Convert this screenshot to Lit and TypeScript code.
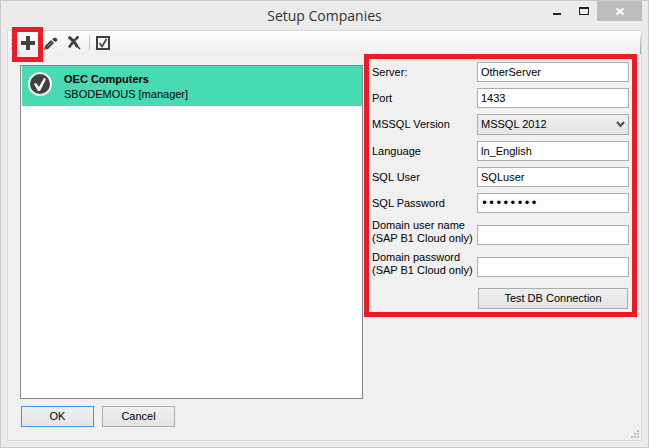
import { LitElement, html, css } from "lit";
import { customElement, property, state } from "lit/decorators.js";
import { classMap } from "lit/directives/class-map.js";

interface Company {
  name: string;
  detail: string;
}

interface Field {
  id: string;
  label: string;
  note?: string;
  type: "text" | "password" | "select";
  value: string;
}

const COMPANIES: Company[] = [{ name: "OEC Computers", detail: "SBODEMOUS [manager]" }];

const FIELDS: Field[] = [
  { id: "server", label: "Server:", type: "text", value: "OtherServer" },
  { id: "port", label: "Port", type: "text", value: "1433" },
  { id: "version", label: "MSSQL Version", type: "select", value: "MSSQL 2012" },
  { id: "language", label: "Language", type: "text", value: "ln_English" },
  { id: "sql-user", label: "SQL User", type: "text", value: "SQLuser" },
  { id: "sql-password", label: "SQL Password", type: "password", value: "password" },
  { id: "domain-user", label: "Domain user name", note: "(SAP B1 Cloud only)", type: "text", value: "" },
  { id: "domain-password", label: "Domain password", note: "(SAP B1 Cloud only)", type: "password", value: "" },
];

const buttonStyles = css`
  .push {
    box-sizing: border-box;
    height: 21px;
    padding: 0;
    border: 1px solid #acacac;
    border-radius: 0;
    background: linear-gradient(#f0f0f0, #e4e4e4);
    color: #000;
    font: inherit;
  }
`;

@customElement("title-bar")
export class TitleBar extends LitElement {
  @property() heading = "";

  static styles = css`
    :host {
      display: grid;
      grid-template-columns: 1fr auto 1fr;
      height: 29px;
      padding: 0 6px;
    }
    .heading {
      grid-column: 2;
      margin: 0;
      font: 14px/30px "Open Sans", sans-serif;
      color: #333;
    }
    .controls {
      display: flex;
      justify-content: flex-end;
      height: 20px;
    }
    button {
      width: 27px;
      padding: 0;
      border: 0;
      background: none;
    }
    .close {
      width: 45px;
      background: #bcbcbc;
    }
    svg {
      display: block;
      margin: auto;
    }
  `;

  render() {
    return html`
      <h1 class="heading">${this.heading}</h1>
      <div class="controls">
        <button aria-label="Minimize">
          <svg width="27" height="20"><path d="M10 12h8v2h-8z" fill="#222" /></svg>
        </button>
        <button aria-label="Maximize">
          <svg width="27" height="20"><path fill-rule="evenodd" d="M9 6h10v8H9zM10 8h8v5h-8z" fill="#222" /></svg>
        </button>
        <button class="close" aria-label="Close">
          <svg width="45" height="20"><path d="M19.5 7.5l7 6M26.5 7.5l-7 6" stroke="#fff" stroke-width="2" /></svg>
        </button>
      </div>
    `;
  }
}

@customElement("tool-bar")
export class ToolBar extends LitElement {
  static styles = css`
    :host {
      display: flex;
      align-items: center;
      gap: 8px;
      height: 23px;
      padding-left: 3px;
      background: linear-gradient(#fefefe, #efefef);
    }
    .grip {
      width: 1px;
      height: 15px;
      margin-right: 1px;
      background: repeating-linear-gradient(#c4c4c4 0 2px, transparent 2px 4px);
    }
    button {
      position: relative;
      width: 15px;
      height: 15px;
      padding: 0;
      border: 0;
      background: none;
    }
    svg {
      display: block;
    }
    .marked::after {
      content: "";
      position: absolute;
      z-index: 1;
      inset: -8px -7px -12px -9px;
      border: 5px solid #ed1c24;
    }
    .separator {
      width: 1px;
      height: 15px;
      margin: 0 -2px 0 -1px;
      background: #c4c4c4;
    }
    .end {
      align-self: flex-end;
      width: 1px;
      height: 18px;
      margin-left: auto;
      background: linear-gradient(#d8d8d8, #a0a0a0);
    }
  `;

  render() {
    return html`
      <span class="grip"></span>
      <button class="marked" aria-label="Add company">
        <svg width="15" height="15"><path d="M5 1h4v5h5v4H9v5H5v-5H0V6h5z" fill="#404040" /></svg>
      </button>
      <button aria-label="Edit company">
        <svg width="15" height="15">
          <path d="M0 15l1-4 6-6 3 3-6 6z" fill="#404040" />
          <path d="M8 4l2-1q1-1 2 0l1 1q1 1 0 2l-2 1z" fill="#404040" />
          <path d="M3 12l5-5M1 13l1 1" stroke="#aaa" stroke-width=".7" />
        </svg>
      </button>
      <button aria-label="Delete company">
        <svg width="15" height="15" fill="none" stroke="#404040">
          <path d="M1.5 2q5 3 9 10" stroke-width="3" />
          <path d="M10 11l3 3" stroke-width="1.5" />
          <path d="M11.5 1.5Q6 6 2 12.5" stroke-width="2.4" />
        </svg>
      </button>
      <span class="separator"></span>
      <button aria-label="Check company">
        <svg width="15" height="15" fill="none" stroke="#404040">
          <path d="M1 2h12v12H1z" stroke-width="2" />
          <path d="M3.5 8l2.5 3.5L10.5 4" stroke-width="1.6" />
        </svg>
      </button>
      <span class="end"></span>
    `;
  }
}

@customElement("company-list")
export class CompanyList extends LitElement {
  @property({ attribute: false }) companies: Company[] = [];
  @state() private selected = 0;

  static styles = css`
    :host {
      display: block;
      box-sizing: border-box;
      border: 1px solid #828790;
      background: #fff;
    }
    .list {
      margin: 0;
      padding: 0 0 0 1px;
      list-style: none;
    }
    .item {
      display: flex;
      gap: 11px;
      width: 100%;
      height: 40px;
      padding: 6px 5px;
      border: 0;
      background: #fff;
      color: #000;
      font: inherit;
      line-height: 15px;
      text-align: left;
    }
    .selected {
      background: #48dab3;
    }
    svg {
      flex: none;
    }
    .name,
    .detail {
      display: block;
    }
    .name {
      font-weight: bold;
    }
  `;

  render() {
    return html`
      <ul class="list">
        ${this.companies.map(
          (company, index) => html`
            <li>
              <button
                class=${classMap({ item: true, selected: index === this.selected })}
                @click=${() => (this.selected = index)}
              >
                <svg width="26" height="26">
                  <circle cx="13" cy="12" r="11" fill="#404040" stroke="#f2f2f2" stroke-width="2" />
                  <path d="M7 12l2-1 3 4 5-9 2 1-6 12h-2z" fill="#fff" />
                </svg>
                <span>
                  <span class="name">${company.name}</span>
                  <span class="detail">${company.detail}</span>
                </span>
              </button>
            </li>
          `,
        )}
      </ul>
    `;
  }
}

@customElement("connection-form")
export class ConnectionForm extends LitElement {
  @property({ attribute: false }) fields: Field[] = [];

  static styles = [
    buttonStyles,
    css`
      :host {
        display: block;
        border: 5px solid #ed1c24;
      }
      .form {
        display: grid;
        grid-template-columns: 105px minmax(0, 1fr);
        row-gap: 6px;
        align-items: end;
        padding: 3px;
      }
      label {
        align-self: center;
        line-height: 13px;
        white-space: nowrap;
      }
      .note {
        display: block;
      }
      input,
      select {
        box-sizing: border-box;
        width: 100%;
        height: 20px;
        margin: 0;
        padding: 0 3px;
        border: 1px solid #abadb3;
        border-radius: 0;
        background: #fff;
        color: #000;
        font: inherit;
      }
      input[type="password"] {
        font-family: "DejaVu Sans", sans-serif;
        font-size: 12px;
      }
      .picker {
        display: grid;
        align-items: center;
      }
      .picker > * {
        grid-area: 1 / 1;
      }
      select {
        appearance: none;
        height: 21px;
        border-color: #acacac;
        background: linear-gradient(#f0f0f0, #e4e4e4);
      }
      .chevron {
        justify-self: end;
        margin-right: 4px;
        pointer-events: none;
      }
      .push {
        grid-column: 2;
        margin: 5px 1px 0;
      }
    `,
  ];

  private control(field: Field) {
    if (field.type === "select") {
      return html`
        <span class="picker">
          <select id=${field.id}><option>${field.value}</option></select>
          <svg class="chevron" width="9" height="7">
            <path d="M1 1l3.5 4L8 1" fill="none" stroke="#505050" stroke-width="2" />
          </svg>
        </span>
      `;
    }
    return html`<input id=${field.id} type=${field.type} .value=${field.value} autocomplete="off" />`;
  }

  render() {
    return html`
      <form class="form" @submit=${(event: Event) => event.preventDefault()}>
        ${this.fields.map(
          (field) => html`
            <label for=${field.id}
              >${field.label}${field.note ? html`<span class="note">${field.note}</span>` : ""}</label
            >
            ${this.control(field)}
          `,
        )}
        <button class="push">Test DB Connection</button>
      </form>
    `;
  }
}

@customElement("app-root")
export class AppRoot extends LitElement {
  static styles = [
    buttonStyles,
    css`
      :host {
        display: flex;
        flex-direction: column;
        box-sizing: border-box;
        min-height: 100vh;
        border: 1px solid #cacaca;
        background: #ebebeb;
        color: #000;
        font: 11px/15px "Liberation Sans", Arial, sans-serif;
      }
      .client {
        display: flex;
        flex: 1;
        flex-direction: column;
        margin: 0 6px 6px;
        border: 1px solid #d9d9d9;
        background: #f0f0f0;
      }
      .body {
        display: grid;
        flex: 1;
        grid-template-columns: minmax(0, 1fr) 273px;
        column-gap: 1px;
        align-items: start;
        padding: 0 4px 0 12px;
      }
      .companies {
        align-self: stretch;
        margin-top: 11px;
      }
      .footer {
        display: flex;
        gap: 8px;
        padding: 7px 2px 2px 13px;
      }
      .footer .push {
        width: 73px;
        margin-bottom: 11px;
      }
      .footer .default {
        border-color: #3399ff;
      }
      .sizer {
        align-self: flex-end;
        margin-left: auto;
      }
    `,
  ];

  render() {
    return html`
      <title-bar heading="Setup Companies"></title-bar>
      <main class="client">
        <tool-bar></tool-bar>
        <div class="body">
          <company-list class="companies" .companies=${COMPANIES}></company-list>
          <connection-form .fields=${FIELDS}></connection-form>
        </div>
        <footer class="footer">
          <button class="push default">OK</button>
          <button class="push">Cancel</button>
          <svg class="sizer" width="8" height="8" fill="#bfbfbf">
            <path d="M6 0h2v2H6zM3 3h2v2H3zM6 3h2v2H6zM0 6h2v2H0zM3 6h2v2H3zM6 6h2v2H6z" />
          </svg>
        </footer>
      </main>
    `;
  }
}
